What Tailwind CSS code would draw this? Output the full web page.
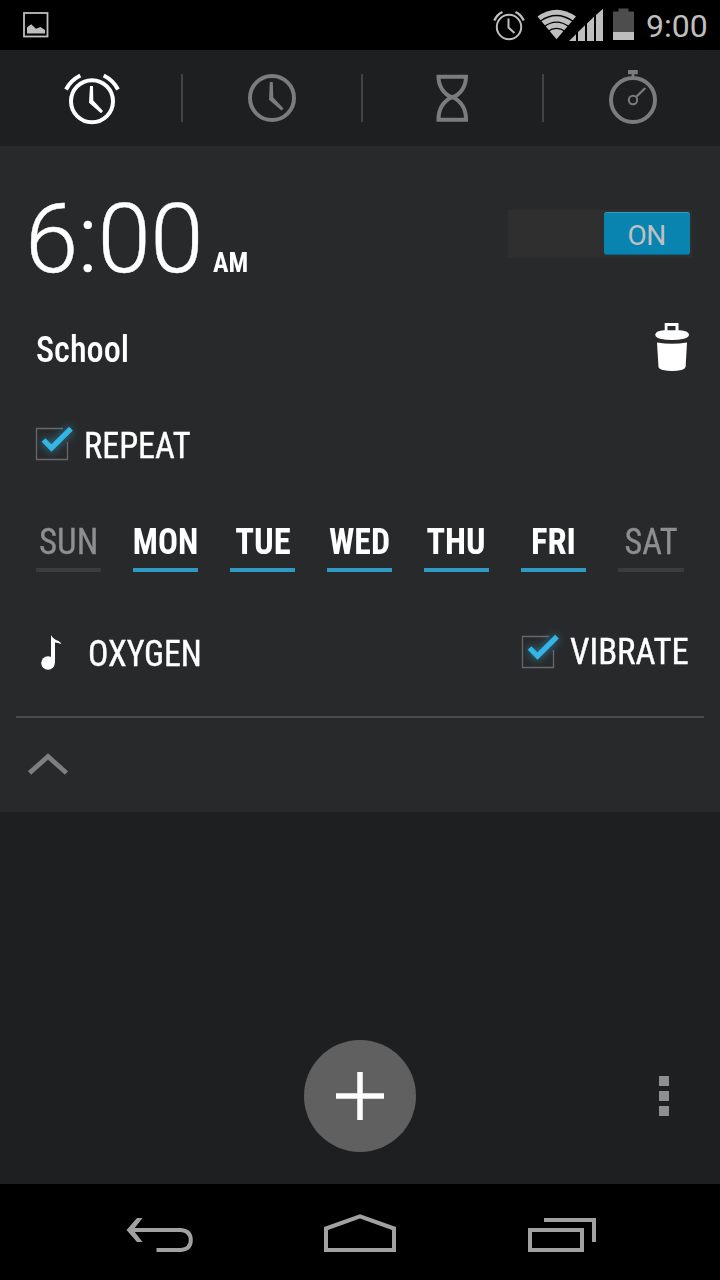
<!DOCTYPE html>
<html lang="en">
<head>
<meta charset="utf-8">
<title>Alarm</title>
<script src="https://cdn.jsdelivr.net/npm/@tailwindcss/browser@4"></script>
</head>
<body class="bg-black">
<div class="flex h-[1280px] w-[720px] flex-col overflow-hidden bg-[#1e1f21] font-['Roboto',sans-serif] text-white">

  <!-- Status bar -->
  <header class="flex h-[50px] shrink-0 items-center justify-between bg-black pr-[17px] pl-[23px] text-[#bebebe]">
    <svg class="h-[26px] w-[26px]" viewBox="0 0 26 26"><rect x="1" y="1" width="23.5" height="23.5" fill="none" stroke="currentColor" stroke-width="1.8"/><path d="M4 21.500V15.500L8.200 12.300L13 16.800L17.500 15L22 18V21.500Z" fill="currentColor"/></svg>
    <div class="flex h-[50px] items-center">
      <svg class="h-[50px] w-[148px] shrink-0" viewBox="493 0 148 50" fill="none" stroke="currentColor">
        <circle cx="509" cy="27" r="12.2" stroke-width="2"/>
        <path d="M508.5 18.5V27.5L514.5 33" stroke-width="2"/>
        <path d="M494.3 20.5Q497 14.5 502.5 12M523.7 20.5Q521 14.5 515.5 12" stroke-width="2.4"/>
        <path d="M537.5 16.5Q556.500 3 576 16.500L556.500 39.200Z" fill="currentColor" stroke="none"/>
        <path d="M540 21.200Q556.500 9.800 573 21.200M544 26.600Q556.500 17.500 569 26.600M547.500 31.700Q556.500 25.200 565.500 31.700" stroke="black" stroke-width="1.300"/>
        <path d="M569 41L576 34.300V41ZM578 41V32L585 25.300V41ZM587 41V23.500L594 16.800V41ZM596 41V15L603 8.800V41Z" fill="currentColor" stroke="none"/>
        <path d="M613 11.500H618.500V8.500H628.500V11.500H634V40H613Z" fill="#4d4d4d" stroke="none"/>
        <path d="M613 32H634V40H613Z" fill="currentColor" stroke="none"/>
      </svg>
      <span class="w-[62px] pt-[2px] pl-[5px] text-[32px] leading-[50px] whitespace-nowrap">9:00</span>
    </div>
  </header>

  <!-- Clock tabs -->
  <nav class="flex h-[96px] shrink-0 items-center text-[#7b7c7e]">
    <svg class="h-[96px] w-[181px]" viewBox="0 50 181 96" fill="none" stroke="white"><circle cx="92" cy="101.300" r="21" stroke-width="4"/><path d="M66 89.500Q70.500 80.500 80.300 75.500M118 89.500Q113.500 80.500 103.700 75.500" stroke-width="4"/><path d="M90 86H93L93.300 100.500L103 111L101 113.300L89 102.800Z" fill="white" stroke="none"/></svg>
    <div class="h-[48px] w-[2px] bg-[#424345]"></div>
    <svg class="h-[96px] w-[178px]" viewBox="183 50 178 96" fill="none" stroke="currentColor"><circle cx="272" cy="98" r="22" stroke-width="4"/><path d="M269.800 82H272.800L273.300 97.500L283.500 108.500L281.500 110.500L269 99.800Z" fill="currentColor" stroke="none"/></svg>
    <div class="h-[48px] w-[2px] bg-[#424345]"></div>
    <svg class="h-[96px] w-[179px]" viewBox="363 50 179 96" fill="none" stroke="currentColor" stroke-width="4"><path d="M438.500 76.800H466C466 86 461 94 452.300 97.500C443.500 94 438.500 86 438.500 76.800ZM438.500 119.800H466C466 109 461 101 452.300 97C443.500 101 438.500 109 438.500 119.800Z"/></svg>
    <div class="h-[48px] w-[2px] bg-[#424345]"></div>
    <svg class="h-[96px] w-[176px]" viewBox="544 50 176 96" fill="none" stroke="currentColor"><circle cx="633" cy="100" r="22" stroke-width="4"/><circle cx="633" cy="100" r="4.200" stroke-width="2"/><path d="M636 97L645.300 88" stroke-width="2.200"/><path d="M628 70H637.800V74.200H634.300V77H631.700V74.200H628Z" fill="currentColor" stroke="none"/></svg>
  </nav>

  <!-- Expanded alarm -->
  <main class="flex h-[666px] shrink-0 flex-col bg-[#28292b]">
    <section class="flex h-[154px] items-start justify-between pt-[44px] pr-[28px] pl-[25px]">
      <div class="flex items-baseline">
        <span class="w-[188px] text-[96px] leading-[98px] font-light tracking-[-0.5px] whitespace-nowrap font-stretch-98% [-webkit-text-stroke:0.4px_white]">6:00</span>
        <span class="origin-left scale-x-[.93] text-[28px] leading-[28px] font-bold font-stretch-75%">AM</span>
      </div>
      <div class="mt-[20px] flex h-[48px] w-[184px] justify-end bg-[#2f2f2f] pt-[2px] pr-[2px]">
        <div class="h-[43px] w-[86px] rounded-[3px] border-t border-b border-t-[#3c9cc0] border-b-[#07668a] bg-[#0983b0] pr-[1px] text-center text-[28px] leading-[45px] tracking-[-0.5px] text-[#c0c0c0]">ON</div>
      </div>
    </section>

    <section class="flex h-[96px] items-center justify-between pr-[30px] pl-[36px]">
      <span class="origin-left scale-x-[.95] pt-[4px] text-[36px] leading-[36px] font-medium font-stretch-75%">School</span>
      <svg class="mb-[2px] h-[50px] w-[36px]" viewBox="654 322 36 50" fill="white"><path d="M664.700 331V323H678.500V331H675.500V326H667.500V331Z"/><path d="M655.300 334.500Q656 330.500 664 330.200H680Q688 330.500 689 334.500Q689 337.500 684 338.700Q672 341.500 660 338.700Q655.300 337.500 655.300 334.500Z"/><path d="M657 342.500Q672 345 687 342.500L685.600 367Q685 369 681.500 370Q672 371.800 663 370Q659 369 658.500 367Z"/></svg>
    </section>

    <section class="flex h-[96px] items-center pl-[32px]">
      <svg class="h-[48px] w-[48px] overflow-visible" viewBox="0 0 48 48"><g id="check"><path d="M31 8.500H4.500V39.500H35.500V22" fill="none" stroke="#67686a" stroke-width="1.300"/><path d="M11.500 20.300L19.500 28.300L39 8.700" fill="none" stroke="#33b5e5" stroke-width="7" opacity=".5" style="filter:blur(4px)"/><path d="M11.500 20L19.500 28L39 8.700" fill="none" stroke="#33b5e5" stroke-width="5.300"/></g></svg>
      <span class="ml-[4px] origin-left scale-x-[.95] pt-[3px] text-[36px] leading-[36px] font-stretch-75% [-webkit-text-stroke:0.4px_white]">REPEAT</span>
    </section>

    <section class="flex h-[98px] items-center gap-[32px] pt-[10px] pl-[36px] text-[36px] leading-[42px] font-bold font-stretch-75%">
      <div class="flex w-[65px] justify-center border-b-4 border-[#3b3c3e] pb-[5px] font-normal text-[#8e8f90]"><span class="scale-x-[.97] [-webkit-text-stroke:0.3px]">SUN</span></div>
      <div class="flex w-[65px] justify-center border-b-4 border-[#3099c2] pb-[5px]"><span class="scale-x-[.92]">MON</span></div>
      <div class="flex w-[65px] justify-center border-b-4 border-[#3099c2] pb-[5px]"><span class="scale-x-[.96]">TUE</span></div>
      <div class="flex w-[65px] justify-center border-b-4 border-[#3099c2] pb-[5px]"><span class="scale-x-[.94]">WED</span></div>
      <div class="flex w-[65px] justify-center border-b-4 border-[#3099c2] pb-[5px]"><span class="scale-x-[.95]">THU</span></div>
      <div class="flex w-[65px] justify-center border-b-4 border-[#3099c2] pb-[5px]"><span class="scale-x-[.96]">FRI</span></div>
      <div class="flex w-[66px] justify-center border-b-4 border-[#3b3c3e] pb-[5px] font-normal text-[#8e8f90]"><span class="scale-x-[.95] [-webkit-text-stroke:0.3px]">SAT</span></div>
    </section>

    <section class="flex h-[126px] items-center justify-between pr-[31px] pl-[40px] text-[36px] leading-[36px] font-stretch-75%">
      <div class="flex items-center">
        <svg class="mb-[2px] h-[38px] w-[24px]" viewBox="40 633 24 38" fill="white"><circle cx="48" cy="663" r="6.800"/><path d="M51 635Q53 639 58.500 641Q61 642.500 61.300 644Q58 642.500 55 642.500V663H51Z"/></svg>
        <span class="ml-[24px] origin-left scale-x-[.94] pt-[2px] [-webkit-text-stroke:0.4px_white]">OXYGEN</span>
      </div>
      <div class="flex items-center pb-[2px]">
        <svg class="h-[48px] w-[48px] overflow-visible" viewBox="0 0 48 48"><use href="#check"/></svg>
        <span class="mr-[-4px] ml-[4px] origin-left scale-x-[.965] [-webkit-text-stroke:0.4px_white]">VIBRATE</span>
      </div>
    </section>

    <section class="mx-[16px] flex flex-1 items-start border-t-2 border-[#4a4b4d] pt-[35px] pl-[12px]">
      <svg class="h-[24px] w-[42px]" viewBox="28 753 42 24"><path d="M29.500 773L48 756.500L66.500 773" fill="none" stroke="#7d7e7f" stroke-width="4.800"/></svg>
    </section>
  </main>

  <!-- Action area -->
  <footer class="grid flex-1 grid-cols-3 items-start pt-[228px]">
    <div></div>
    <div class="flex h-[112px] w-[112px] items-center justify-center justify-self-center rounded-full bg-[#606060]"><svg class="h-[48px] w-[48px]" viewBox="0 0 48 48"><path d="M24 0V48M0 24H48" stroke="white" stroke-width="5.500"/></svg></div>
    <div class="mt-[36px] mr-[51px] flex flex-col gap-[5px] justify-self-end">
      <i class="h-[10px] w-[10px] bg-[#8e8f90]"></i><i class="h-[10px] w-[10px] bg-[#8e8f90]"></i><i class="h-[10px] w-[10px] bg-[#8e8f90]"></i>
    </div>
  </footer>

  <!-- System navigation -->
  <nav class="flex h-[96px] shrink-0 items-center bg-black">
    <svg class="h-[96px] w-[720px]" viewBox="0 1184 720 96" fill="none" stroke="#a1a1a1" stroke-width="4"><path d="M131 1230H181Q190.800 1231 190.800 1240Q190.800 1249 181 1250H156.500"/><path d="M137 1218H142.500L133.200 1230L142.500 1242H137L126.500 1230Z" fill="#a1a1a1" stroke="none"/><path d="M326 1250V1228.500L360 1216.300L394 1228.500V1250Z"/><path d="M530 1230H582V1250H530ZM544 1220H594V1242"/></svg>
  </nav>
</div>
</body>
</html>
